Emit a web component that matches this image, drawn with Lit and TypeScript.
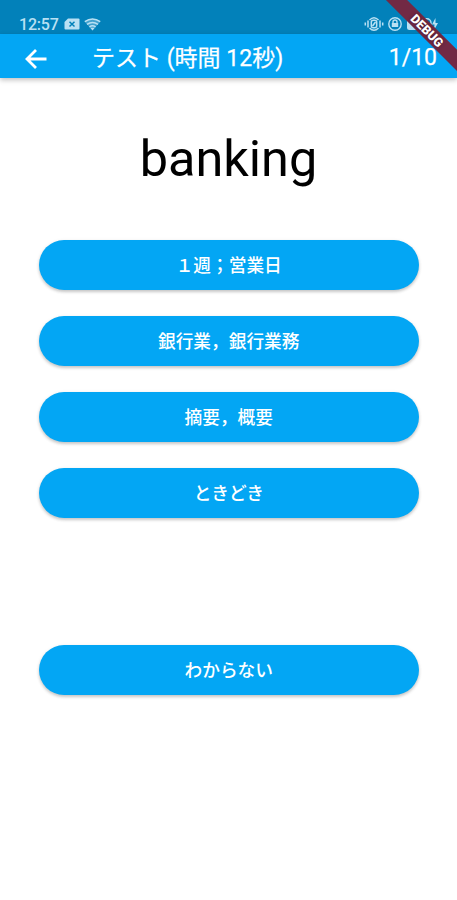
import { LitElement, html, css } from "lit";
import { customElement, property } from "lit/decorators.js";

@customElement("status-bar")
class StatusBar extends LitElement {
  static styles = css`
    :host { display: flex; height: 34px; box-sizing: border-box; padding: 14px 18px 0 19px; background: #0281ba; color: #b9e0f3; justify-content: space-between; }
    .group { display: flex; align-items: center; height: 20px; }
    .time { font-size: 16px; line-height: 20px; letter-spacing: -0.2px; width: 45px; font-weight: 500; white-space: nowrap; padding-top: 1px; }
    svg { display: block; overflow: visible; }
    .wifi { margin-left: 4px; }
    .lock { margin-left: 4px; }
    .battery { margin-left: 5px; }
  `;
  render() {
    return html`
      <div class="group">
        <span class="time">12:57</span>
        <svg width="16" height="12" viewBox="0 0 16 12"><path fill="#b9e0f3" d="M4 .5h10.5a1 1 0 0 1 1 1v9a1 1 0 0 1-1 1h-13a1 1 0 0 1-1-1V4z"/><path d="M5.5 3.7l5 4.8M10.5 3.7l-5 4.8" stroke="#0281ba" stroke-width="1.5"/></svg>
        <svg class="wifi" width="17" height="13" viewBox="0 0 17 13"><path fill="#b9e0f3" fill-opacity=".35" d="M.5 3.6Q8.5-2.2 16.5 3.6L8.5 12.5z"/><path d="M.8 3.7Q8.5-1.8 16.2 3.7M3 6.4q5.5-4 11 0M5.4 9q3.1-2.3 6.2 0" fill="none" stroke="#b9e0f3" stroke-width="1.5"/><path fill="#b9e0f3" d="M6.3 9.8h4.4L8.5 12.5z"/></svg>
      </div>
      <div class="group">
        <svg width="20" height="14" viewBox="0 0 20 14" fill="none" stroke="#b9e0f3" stroke-width="1.5"><path d="M5.5 3Q10-1.500 14.500 3M5.500 11q4.500 4.500 9 0M4 3.500v7M16 3.500v7M1.300 5.500v3M18.700 5.500v3"/><rect x="7.300" y="3.300" width="5.400" height="7.400" rx="2"/><path d="M8.500 9l3-4"/></svg>
        <svg class="lock" width="14" height="14" viewBox="0 0 14 14" fill="none" stroke="#b9e0f3" stroke-width="1.4"><circle cx="7" cy="7" r="6.2"/><path d="M5 6V5a2 2 0 0 1 4 0v1"/><path fill="#b9e0f3" stroke="none" d="M3.8 6h6.4v4H3.800z"/></svg>
        <svg class="battery" width="32" height="14" viewBox="0 0 32 14"><rect x="0" y="1" width="15" height="12" rx="2.5" fill="#b9e0f3"/><path d="M14 1.700h6a4 4 0 0 1 4 4v2.600a4 4 0 0 1-4 4h-6" fill="none" stroke="#b9e0f3" stroke-width="1.4"/><path d="M28.500 1L25 7.500h2.500L27 13l4-7h-2.500z" fill="#b9e0f3"/></svg>
      </div>`;
  }
}

@customElement("answer-button")
class AnswerButton extends LitElement {
  @property() label = "";
  static styles = css`
    :host { display: block; }
    .button { display: block; width: 100%; height: 50.6px; padding: 3px 0 0; border: 0; border-radius: 26px; background: #03a6f4; color: #fff; font: 500 17.7px/25px Roboto, "Noto Sans CJK JP", sans-serif; box-shadow: 0 2px 3px rgba(0, 0, 0, 0.18), 0 1px 4px rgba(0, 0, 0, 0.08); }
  `;
  render() {
    return html`<button class="button">${this.label}</button>`;
  }
}

@customElement("app-root")
class AppRoot extends LitElement {
  static styles = css`
    :host { display: block; position: relative; height: 900px; overflow: hidden; background: #fff; font-family: Roboto, "Noto Sans CJK JP", sans-serif; }
    .bar { display: flex; align-items: center; height: 44px; box-sizing: border-box; padding: 0 20px 0 25px; background: #03a6f4; color: #fff; box-shadow: 0 2px 5px rgba(0, 0, 0, 0.25); }
    .back { display: block; width: 22px; height: 20px; margin-top: 6px; }
    .title { margin: 0 auto 0 45px; padding-top: 5px; font-size: 23px; font-weight: 400; line-height: 30px; white-space: nowrap; -webkit-text-stroke: 0.25px #fff; }
    .count { padding-top: 4px; font-size: 23px; line-height: 30px; -webkit-text-stroke: 0.25px #fff; }
    .word { margin: 48.5px 0 0; height: 65px; font-size: 50.4px; line-height: 64px; font-weight: 400; text-align: center; color: #000; }
    .answers { display: grid; gap: 25.5px; padding: 48px 38px 0 38.5px; }
    .skip { padding: 126.5px 38px 0 38.5px; }
    .debug { position: absolute; left: 367px; top: 23px; width: 120px; height: 15.2px; transform: rotate(45deg); background: #722944; color: #fff; font: 900 12.6px/15.5px Roboto, sans-serif; text-align: center; text-shadow: 0 0 4px rgba(0, 0, 0, 0.4); }
  `;
  private answers = ["１週；営業日", "銀行業，銀行業務", "摘要，概要", "ときどき"];
  render() {
    return html`
      <status-bar></status-bar>
      <header class="bar">
        <svg class="back" viewBox="0 0 22 20"><path d="M11 1L2 10l9 9M2.5 10H21.5" fill="none" stroke="#fff" stroke-width="2.8"/></svg>
        <h1 class="title">テスト (時間 12秒)</h1>
        <span class="count">1/10</span>
      </header>
      <h2 class="word">banking</h2>
      <div class="answers">${this.answers.map((a) => html`<answer-button .label=${a}></answer-button>`)}</div>
      <div class="skip"><answer-button .label=${"わからない"}></answer-button></div>
      <div class="debug">DEBUG</div>`;
  }
}
